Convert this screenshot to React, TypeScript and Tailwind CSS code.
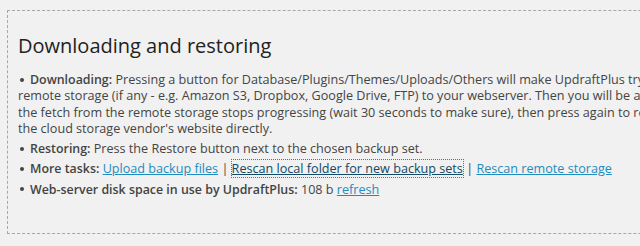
import React from "react";

function Dot() {
  return (
    <span className="inline-block w-[4px] h-[4px] rounded-full bg-[#444] align-middle ml-[2px] mr-[6px] mb-[2px]" />
  );
}

function B({ children }: { children: React.ReactNode }) {
  return <strong className="font-semibold text-[12.4px]">{children}</strong>;
}

export default function App() {
  const font = { fontFamily: '"Open Sans", "Noto Sans", sans-serif' };
  return (
    <div
      className="w-[640px] h-[246px] overflow-hidden bg-[#f1f1f1] pt-[10px] pl-[7px] text-[#444]"
      style={font}
    >
      <div className="w-[900px] h-[224px] border border-dashed border-[#a7a7a7] pl-[10px]">
        <h2 className="mt-[22px] text-[20px] leading-[26px] font-normal text-[#222]">
          Downloading and restoring
        </h2>
        <ul className="mt-[13px] list-none text-[12.62px] leading-[16.25px] whitespace-nowrap">
          <li className="mb-[4px]">
            <Dot />
            <B>Downloading:</B> Pressing a button for
            Database/Plugins/Themes/Uploads/Others will make UpdraftPlus try to bring the backup file
            back from the
            <br />
            remote storage (if any - e.g. Amazon S3, Dropbox, Google Drive, FTP) to your webserver. Then
            you will be allowed to download it to your computer. If
            <br />
            the fetch from the remote storage stops progressing (wait 30 seconds to make sure), then
            press again to resume from where it left off. Remember that you can also visit
            <br />
            the cloud storage vendor's website directly.
          </li>
          <li className="mb-[4px]">
            <Dot />
            <B>Restoring:</B> Press the Restore button next to the
            chosen backup set.
          </li>
          <li className="mb-[4px]">
            <Dot />
            <B>More tasks:</B>{" "}
            <a href="#" className="text-[#1e8cbe] underline">
              Upload backup files
            </a>{" "}
            |{" "}
            <a
              href="#"
              className="text-[#124964] underline outline-1 outline-dotted outline-[#5b6e80]"
            >
              Rescan local folder for new backup sets
            </a>{" "}
            |{" "}
            <a href="#" className="text-[#1e8cbe] underline">
              Rescan remote storage
            </a>
          </li>
          <li>
            <Dot />
            <B>Web-server disk space in use by UpdraftPlus:</B> 108 b{" "}
            <a href="#" className="text-[#1e8cbe] underline">
              refresh
            </a>
          </li>
        </ul>
      </div>
    </div>
  );
}
